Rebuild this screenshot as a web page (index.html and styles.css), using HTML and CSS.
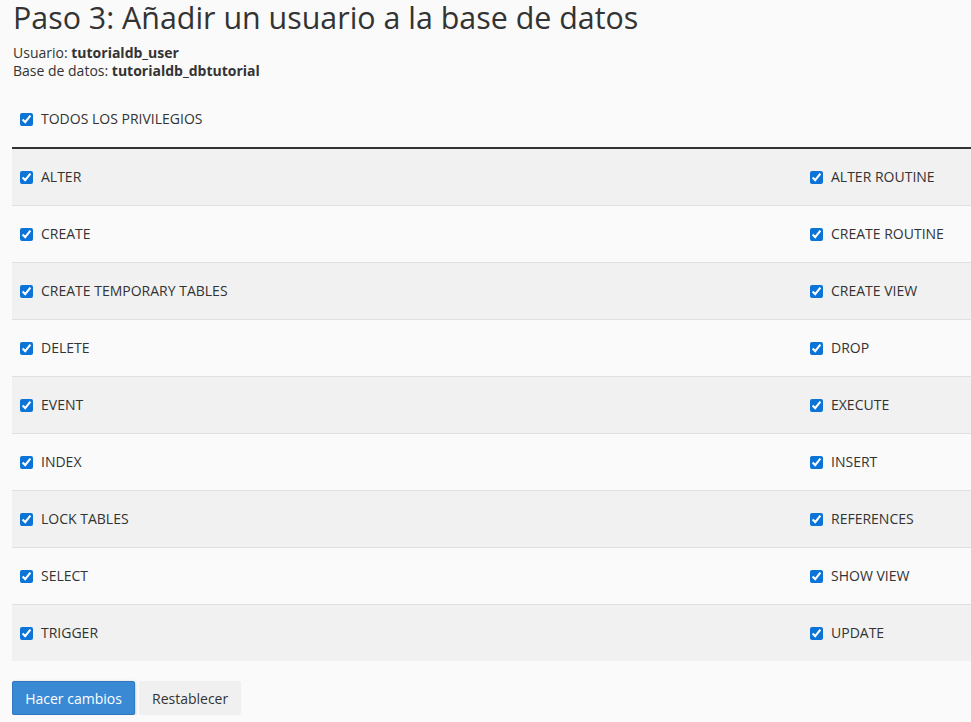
FILE: index.html
```html
<!DOCTYPE html>
<html lang="es">
<head>
<meta charset="utf-8">
<title>Paso 3</title>
<link rel="stylesheet" href="styles.css">
</head>
<body>
<h1 class="title">Paso 3: Añadir un usuario a la base de datos</h1>
<div class="info">
  <div>Usuario: <strong>tutorialdb_user</strong></div>
  <div>Base de datos: <strong>tutorialdb_dbtutorial</strong></div>
</div>
<div class="all-row">
  <label class="cell"><input type="checkbox" checked><span>TODOS LOS PRIVILEGIOS</span></label>
</div>
<div class="privs">
  <div class="row"><label class="cell"><input type="checkbox" checked><span>ALTER</span></label><label class="cell"><input type="checkbox" checked><span>ALTER ROUTINE</span></label></div>
  <div class="row"><label class="cell"><input type="checkbox" checked><span>CREATE</span></label><label class="cell"><input type="checkbox" checked><span>CREATE ROUTINE</span></label></div>
  <div class="row"><label class="cell"><input type="checkbox" checked><span>CREATE TEMPORARY TABLES</span></label><label class="cell"><input type="checkbox" checked><span>CREATE VIEW</span></label></div>
  <div class="row"><label class="cell"><input type="checkbox" checked><span>DELETE</span></label><label class="cell"><input type="checkbox" checked><span>DROP</span></label></div>
  <div class="row"><label class="cell"><input type="checkbox" checked><span>EVENT</span></label><label class="cell"><input type="checkbox" checked><span>EXECUTE</span></label></div>
  <div class="row"><label class="cell"><input type="checkbox" checked><span>INDEX</span></label><label class="cell"><input type="checkbox" checked><span>INSERT</span></label></div>
  <div class="row"><label class="cell"><input type="checkbox" checked><span>LOCK TABLES</span></label><label class="cell"><input type="checkbox" checked><span>REFERENCES</span></label></div>
  <div class="row"><label class="cell"><input type="checkbox" checked><span>SELECT</span></label><label class="cell"><input type="checkbox" checked><span>SHOW VIEW</span></label></div>
  <div class="row"><label class="cell"><input type="checkbox" checked><span>TRIGGER</span></label><label class="cell"><input type="checkbox" checked><span>UPDATE</span></label></div>
</div>
<div class="actions">
  <button class="btn btn-primary" type="button">Hacer cambios</button>
  <button class="btn btn-default" type="button">Restablecer</button>
</div>
</body>
</html>
```

FILE: styles.css
```css
html, body {
  background: #fafafa;
}
body {
  margin: 0 0 0 12px;
  font-family: "Open Sans", "Liberation Sans", sans-serif;
  color: #333;
  font-size: 14px;
}
.title {
  margin: 0 0 0 1px;
  font-size: 30.4px;
  line-height: 36px;
  font-weight: 400;
  color: #333;
}
.info {
  margin-top: 8px;
  font-size: 14px;
  line-height: 18px;
  margin-left: 1px;
}
.info strong {
  font-weight: 700;
}
.all-row {
  margin-top: 11px;
  height: 56px;
  display: flex;
  align-items: center;
  border-bottom: 2px solid #333;
}
.cell {
  display: flex;
  align-items: center;
  padding-left: 8px;
  height: 56px;
  font-size: 14px;
  line-height: 20px;
}
.cell input {
  width: 13px;
  height: 13px;
  margin: 0 8px 0 0;
  accent-color: #0b74d6;
}
.privs {
  display: flex;
  flex-direction: column;
}
.row {
  display: grid;
  grid-template-columns: 1fr 169px;
  border-bottom: 1px solid #e0e0e0;
}
.row:nth-child(odd) {
  background: #f1f1f1;
}
.row:nth-child(even) {
  background: #fafafa;
}
.row:last-child {
  border-bottom: none;
}
.actions {
  margin-top: 20px;
  display: flex;
  gap: 4px;
}
.btn {
  font-family: "Open Sans", "Liberation Sans", sans-serif;
  font-size: 14px;
  height: 34px;
  border-radius: 2px;
  padding: 0 12px;
  cursor: pointer;
}
.btn-primary {
  background: #3a89d4;
  color: #fff;
  border: 1px solid #2f78bf;
  box-shadow: 0 1px 3px rgba(0, 0, 0, 0.35);
  width: 123px;
}
.btn-default {
  background: #f0f0f0;
  color: #333;
  border: 1px solid #f0f0f0;
  width: 102px;
}
```
